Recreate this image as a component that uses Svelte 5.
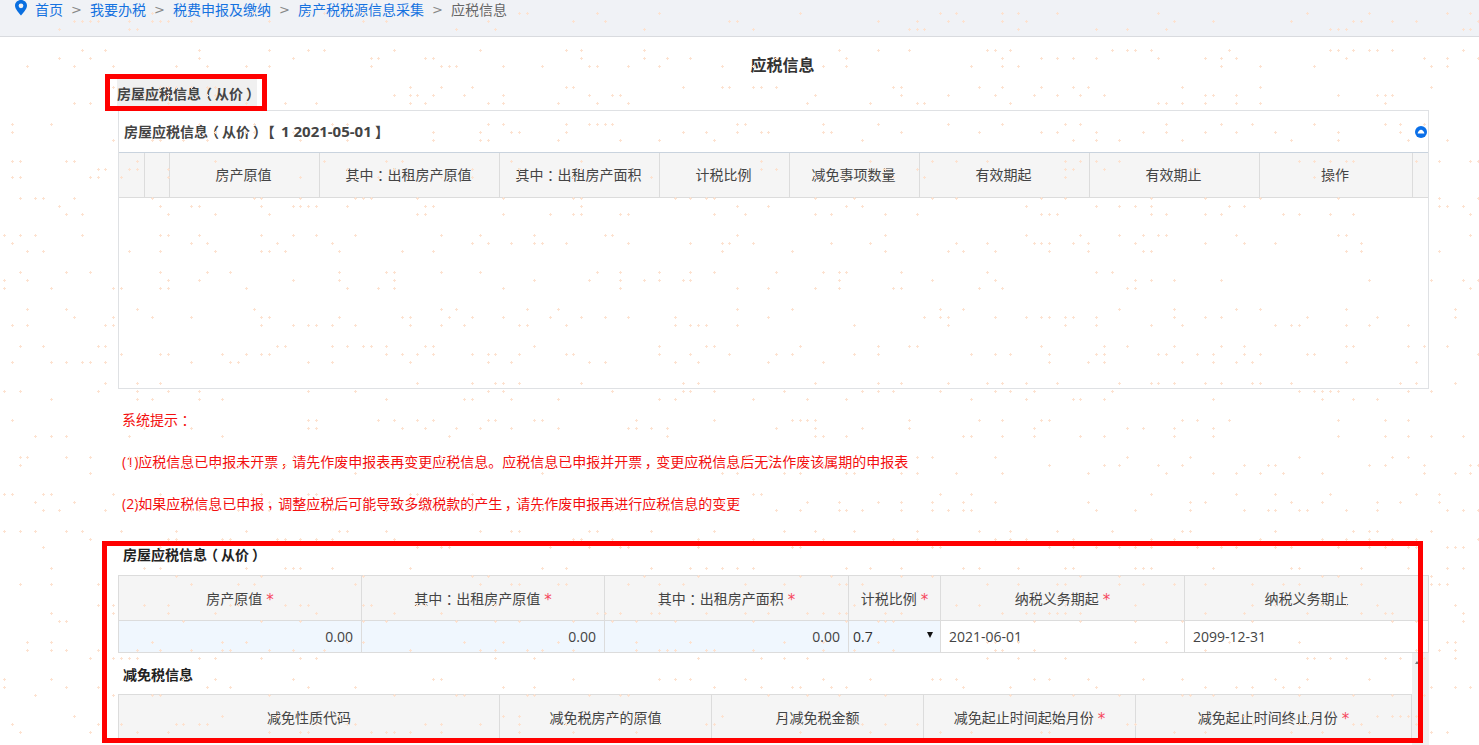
<script>
  const crumbs = ['首页', '我要办税', '税费申报及缴纳', '房产税税源信息采集'];
  const head1 = ['', '', '房产原值', '其中：出租房产原值', '其中：出租房产面积', '计税比例', '减免事项数量', '有效期起', '有效期止', '操作', ''];
  const head2 = [['房产原值', 1], ['其中：出租房产原值', 1], ['其中：出租房产面积', 1], ['计税比例', 1], ['纳税义务期起', 1], ['纳税义务期止', 0]];
  const head3 = [['减免性质代码', 0], ['减免税房产的原值', 0], ['月减免税金额', 0], ['减免起止时间起始月份', 1], ['减免起止时间终止月份', 1]];

  const split = (s) => s.split(/([（），：【】])/).filter(Boolean);
  const isPunct = (s) => /^[（），：【】]$/.test(s);

  let seed = 20210501;
  function rnd() {
    seed = (seed + 0x6d2b79f5) | 0;
    let t = Math.imul(seed ^ (seed >>> 15), 1 | seed);
    t = (t + Math.imul(t ^ (t >>> 7), 61 | t)) ^ t;
    return ((t ^ (t >>> 14)) >>> 0) / 4294967296;
  }
  let d = '';
  for (let band = 0; band < 21; band++) {
    for (let r = 0; r < 3; r++) {
      const y = 13 + band * 37 + r * 8;
      for (let c = 0; c < 190; c++) {
        if (rnd() < 0.15) {
          const x = Math.round(4 + c * 7.8);
          d += `M${x - 1} ${y + 0.5}h3M${x + 0.5} ${y - 1}v3`;
        }
      }
    }
  }
</script>

{#snippet t(s)}{#each split(s) as seg}{#if isPunct(seg)}<span class="p">{seg}</span>{:else}{seg}{/if}{/each}{/snippet}

<div class="page">
  <nav class="crumbs">
    <svg class="pin" viewBox="0 0 12 16" width="12" height="16" aria-hidden="true">
      <path fill="#0a6fe0" fill-rule="evenodd" d="M6 0C2.7 0 0 2.4 0 5.6 0 9.4 4.6 13.6 6 15.6 7.4 13.6 12 9.4 12 5.6 12 2.4 9.3 0 6 0ZM6 3.4a2.4 2.4 0 1 1 0 4.8 2.4 2.4 0 0 1 0-4.8Z" />
    </svg>
    {#each crumbs as c}
      <span class="link">{c}</span><span class="sep">&gt;</span>
    {/each}
    <span class="cur">应税信息</span>
  </nav>

  <main class="content">
    <h1 class="title">应税信息</h1>
    <div class="tag-row"><span class="tag">{@render t('房屋应税信息（从价）')}</span></div>

    <section class="panel">
      <div class="panel-head">
        <span>{@render t('房屋应税信息（从价）【')}<span class="period">1 2021-05-01</span>{@render t('】')}</span>
        <svg class="collapse" viewBox="0 0 12 12" width="12" height="12" aria-hidden="true">
          <circle cx="6" cy="6" r="6" fill="#0a6fe8" />
          <path fill="#fff" d="M2.6 7.6C3 5.6 4.4 3.8 6 3.8S9 5.6 9.4 7.6Z" />
        </svg>
      </div>
      <div class="row cols1 hdr">
        {#each head1 as h}<div class="cell"><span>{@render t(h)}</span></div>{/each}
      </div>
      <div class="panel-body"></div>
    </section>

    <div class="notice">
      <p>{@render t('系统提示：')}</p>
      <p>{@render t('(1)应税信息已申报未开票，请先作废申报表再变更应税信息。应税信息已申报并开票，变更应税信息后无法作废该属期的申报表')}</p>
      <p>{@render t('(2)如果应税信息已申报，调整应税后可能导致多缴税款的产生，请先作废申报再进行应税信息的变更')}</p>
    </div>

    <h2 class="sub first">{@render t('房屋应税信息（从价）')}</h2>
    <div class="grid-box">
      <div class="row cols2 hdr tall">
        {#each head2 as h}<div class="cell"><span>{@render t(h[0])}</span>{#if h[1]}<i class="req">*</i>{/if}</div>{/each}
      </div>
      <div class="row cols2 vals">
        <div class="cell num blue">0.00</div>
        <div class="cell num blue">0.00</div>
        <div class="cell num blue">0.00</div>
        <div class="cell sel blue"><span>0.7</span><b class="caret"></b></div>
        <div class="cell date">2021-06-01</div>
        <div class="cell date">2099-12-31</div>
      </div>
    </div>

    <div class="scroll-area">
      <div class="scroll-main">
        <h2 class="sub second">减免税信息</h2>
        <div class="row cols3 hdr tall top">
          {#each head3 as h}<div class="cell"><span>{h[0]}</span>{#if h[1]}<i class="req">*</i>{/if}</div>{/each}
        </div>
      </div>
      <div class="scrollbar"><b class="arrow"></b></div>
    </div>
  </main>

  <svg class="dots" width="1479" height="745" aria-hidden="true"><path {d} /></svg>
  <div class="mark mark-a"></div>
  <div class="mark mark-b"></div>
</div>

<style>
  :global(body) { margin: 0; background: #fff; }
  .page {
    position: relative;
    height: 745px;
    overflow: hidden;
    font-family: "Open Sans", "Noto Sans CJK SC", sans-serif;
    font-size: 14px;
    color: #444;
  }
  .p {
    display: inline-block;
    width: 1em;
    text-align: center;
    font-feature-settings: "palt";
  }
  .period { font-size: 15px; margin-left: 3px; }
  .crumbs {
    box-sizing: border-box;
    height: 37px;
    background: #f0f2f6;
    border-bottom: 1px solid #d9dbdf;
    display: flex;
    align-items: flex-start;
    padding-left: 15px;
    line-height: 19px;
  }
  .pin { margin: 0 8px 0 0; flex: none; }
  .link { color: #1672e0; }
  .sep { color: #888; width: 27px; text-align: center; font-family: "DejaVu Sans", sans-serif; font-size: 13px; }
  .cur { color: #666; }
  .content { padding-left: 118px; width: 1311px; }
  .title {
    margin: 17px 0 0;
    padding-left: 18px;
    font-size: 16px;
    line-height: 22px;
    font-weight: 700;
    text-align: center;
    color: #333;
  }
  .tag-row { height: 31px; margin-top: 3px; margin-left: -1px; }
  .tag {
    display: block;
    width: 140px;
    height: 27px;
    line-height: 29px;
    font-weight: 700;
    background: #f0f0f0;
    color: #444;
    white-space: nowrap;
  }
  .panel { border: 1px solid #dfe1e4; height: 279px; box-sizing: border-box; }
  .panel-head {
    height: 41px;
    display: flex;
    align-items: center;
    justify-content: space-between;
    padding: 0 1px 2px 5px;
    box-sizing: border-box;
    font-weight: 700;
    color: #444;
    white-space: nowrap;
  }
  .collapse { margin-top: 2px; }
  .row { display: grid; box-sizing: border-box; }
  .cols1 {
    grid-template-columns: 26px 25px 150px 180px 160px 130px 130px 170px 170px 153px 1fr;
    height: 46px;
    border-top: 1px solid #c9d3de;
    border-bottom: 1px solid #dcdcdc;
  }
  .cols1 .cell { padding: 0 2px 2px 0; }
  .cell {
    display: flex;
    align-items: center;
    justify-content: center;
    border-right: 1px solid #dcdcdc;
    box-sizing: border-box;
    white-space: nowrap;
  }
  .cell:last-child { border-right: 0; }
  .hdr { background: #f5f5f5; }
  .panel-body { height: 190px; }
  .notice { margin: 21px 0 0 4px; color: #f30f0f; line-height: 20px; font-size: 14px; }
  .notice p { margin: 0 0 22px; }
  .sub { margin: 0; font-size: 14px; line-height: 20px; font-weight: 700; color: #222; padding-left: 5px; }
  .first { margin-top: 31px; }
  .grid-box { margin-top: 10px; border: 1px solid #dcdcdc; }
  .cols2 { grid-template-columns: 243px 243px 244px 92px 244px 1fr; }
  .tall { height: 45px; border-bottom: 1px solid #dcdcdc; }
  .vals { height: 31px; color: #444; }
  .blue { background: #f0f7fe; }
  .num { justify-content: flex-end; padding-right: 8px; }
  .date { justify-content: flex-start; padding-left: 8px; }
  .sel { justify-content: space-between; padding: 0 7px 0 4px; color: #333; }
  .caret { width: 0; height: 0; border: 3.5px solid transparent; border-top: 6px solid #111; border-bottom: 0; margin-top: -3px; }
  .req {
    font-style: normal;
    color: #f6465c;
    margin-left: 4px;
    font-family: "DejaVu Sans", sans-serif;
    font-size: 15px;
    position: relative;
    top: 2px;
  }
  .scroll-area { display: flex; }
  .scroll-main { flex: 1; min-width: 0; }
  .second { margin-top: 12px; }
  .top { border: 1px solid #dcdcdc; margin-top: 9px; height: 46px; }
  .cols3 { grid-template-columns: 381px 212px 212px 212px 1fr; }
  .scrollbar { width: 17px; height: 92px; background: #f1f1f1; position: relative; }
  .arrow { position: absolute; left: 3px; top: 8px; width: 0; height: 0; border: 2.5px solid transparent; border-bottom: 3px solid #777; border-top: 0; }
  .dots { position: absolute; inset: 0; pointer-events: none; }
  .dots path { stroke: #fde2d0; stroke-width: 1; fill: none; }
  .mark { position: absolute; border: 5px solid #f00; box-sizing: border-box; pointer-events: none; }
  .mark-a { left: 105px; top: 74px; width: 162px; height: 37px; }
  .mark-b { left: 102px; top: 541px; width: 1321px; height: 202px; }
</style>
